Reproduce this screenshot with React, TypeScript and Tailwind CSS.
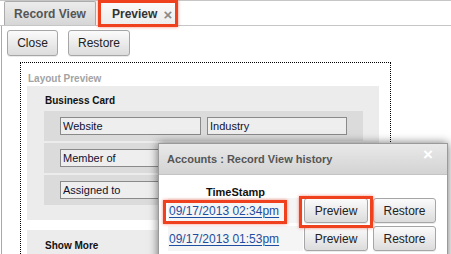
import React from "react";

const btn =
  "flex items-center justify-center border border-[#a6a6a6] rounded-[3px] bg-linear-to-b from-[#fbfbfb] to-[#dcdcdc] text-[12px] text-[#222] shadow-[0_1px_0_rgba(0,0,0,0.08)]";

const redBox =
  "absolute border-[3px] border-[#f0411f] shadow-[0_0_3px_rgba(240,65,31,0.6)] pointer-events-none";

function Field({ label, w }: { label: string; w: string }) {
  return (
    <div
      className={`${w} h-[18px] border border-[#8a8a8a] bg-[#eeeeee] pl-[2px] text-[11px] leading-[16px] text-[#101030] whitespace-nowrap overflow-hidden`}
    >
      {label}
    </div>
  );
}

function Row({ a, b }: { a: string; b?: string }) {
  return (
    <div className="h-[30px] bg-[#dbdbdb] flex items-start pt-[6px] pl-[16px] gap-[6px]">
      <Field label={a} w="w-[141px]" />
      <Field label={b ?? ""} w="w-[140px]" />
    </div>
  );
}

function HistRow({ ts }: { ts: string }) {
  return (
    <div className="flex items-center h-[25px]">
      <div className="w-[135px] h-full bg-[#f5f5f5] flex items-center pl-[1px]">
        <a className="text-[12px] text-[#1d4ea0] underline underline-offset-[2px] whitespace-nowrap">
          {ts}
        </a>
      </div>
      <div className={`${btn} ml-[1px] w-[64px] h-[25px]`}>Preview</div>
      <div className={`${btn} ml-[5px] w-[63px] h-[25px]`}>Restore</div>
    </div>
  );
}

export default function App() {
  return (
    <div className="relative w-[451px] h-[254px] overflow-hidden bg-white font-['Liberation_Sans',Arial,sans-serif]">
      {/* Tab bar */}
      <div className="flex h-[26px] border-t border-b border-[#c6c6c6]">
        <div className="ml-[4px] w-[92px] h-[24px] border-x border-t border-[#ababab] rounded-t-[2px] bg-linear-to-b from-[#ececec] to-[#d6d6d6] flex items-center justify-center text-[12px] font-bold text-[#555]">
          Record View
        </div>
        <div className="ml-[2px] w-[78px] h-[25px] border-x border-t border-[#ababab] rounded-t-[2px] bg-linear-to-b from-[#fafafa] to-[#ececec] flex items-center pl-[13px] text-[12px] font-bold text-[#333]">
          Preview
          <span className="ml-[6px] text-[#8a8a8a] text-[15px] leading-none font-bold">×</span>
        </div>
      </div>

      {/* Content */}
      <div className="ml-px border-l border-[#a9a9a9] h-[228px]">
        <div className="flex pt-[4px] pl-[5px] gap-[10px]">
          <div className={`${btn} w-[51px] h-[26px]`}>Close</div>
          <div className={`${btn} w-[62px] h-[26px]`}>Restore</div>
        </div>

        <div className="mt-[6px] ml-[18px] w-[371px] h-[200px] border border-dotted border-black border-b-0">
          <div className="pt-[10px] pl-[7px] text-[10px] leading-[12px] font-bold text-[#a3a3a3]">
            Layout Preview
          </div>
          <div className="mt-[1px] ml-[6px] w-[352px] bg-[#ececec] pt-[9px] pb-[15px]">
            <div className="pl-[18px] text-[10px] leading-[12px] font-bold text-[#111]">
              Business Card
            </div>
            <div className="mt-[4px] ml-[17px] w-[319px] flex flex-col gap-[2px]">
              <Row a="Website" b="Industry" />
              <Row a="Member of" />
              <Row a="Assigned to" />
            </div>
          </div>
          <div className="mt-[10px] ml-[6px] w-[352px] h-[40px] bg-[#ececec] pt-[10px] pl-[18px] text-[10px] leading-[12px] font-bold text-[#111]">
            Show More
          </div>
        </div>
      </div>

      {/* Dialog */}
      <div className="absolute left-[158px] top-[143px] w-[290px] h-[130px] border border-[#9a9a9a] bg-white shadow-[0_0_9px_rgba(0,0,0,0.55)]">
        <div className="relative h-[31px] border-b border-[#c4c4c4] bg-linear-to-b from-[#e9e9e9] to-[#d3d3d3] pt-[9px] pl-[8px] text-[11px] leading-[13px] font-bold text-[#555]">
          Accounts : Record View history
          <span className="absolute left-[264px] top-[2px] text-white text-[17px] leading-[17px] font-bold">×</span>
        </div>
        <div className="pt-[11px] pl-[9px]">
          <div className="w-[135px] h-[12px] text-center text-[11px] leading-[12px] font-bold text-[#111]">
            TimeStamp
          </div>
          <div className="flex flex-col gap-[3px]">
            <HistRow ts="09/17/2013 02:34pm" />
            <HistRow ts="09/17/2013 01:53pm" />
          </div>
        </div>
      </div>

      {/* Annotations */}
      <div className={`${redBox} left-[98px] top-0 w-[80px] h-[27px]`} />
      <div className={`${redBox} left-[163px] top-[200px] w-[124px] h-[24px]`} />
      <div className={`${redBox} left-[299px] top-[196px] w-[74px] h-[32px]`} />
    </div>
  );
}
